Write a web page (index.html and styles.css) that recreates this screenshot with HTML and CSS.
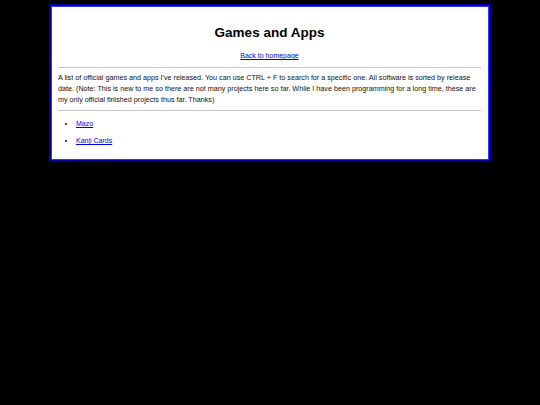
FILE: index.html
```html
<!DOCTYPE html>
<html lang="en">
<head>
<meta charset="utf-8">
<title>Games and Apps</title>
<link rel="stylesheet" href="styles.css">
</head>
<body>
<main class="box">
  <h1 class="title">Games and Apps</h1>
  <p class="back"><a href="#">Back to homepage</a></p>
  <hr class="rule rule-top">
  <p class="intro">A list of official games and apps I've released. You can use CTRL + F to search for a specific one. All software is sorted by release date. (Note: This is new to me so there are not many projects here so far. While I have been programming for a long time, these are my only official finished projects thus far. Thanks)</p>
  <hr class="rule rule-mid">
  <ul class="list">
    <li><a href="#">Mazo</a></li>
    <li><a href="#">Kanji Cards</a></li>
  </ul>
</main>
</body>
</html>
```

FILE: styles.css
```css
html, body {
  margin: 0;
  padding: 0;
  background: #000;
}
body {
  font-family: "Liberation Sans", Arial, sans-serif;
  color: #111;
}
.box {
  box-sizing: border-box;
  width: 442px;
  margin: 4px auto 0;
  background: #fff;
  border: 2px solid #00009a;
  box-shadow: inset 0 0 0 1px #3535ff;
  padding: 1px 8px 13px 7px;
}
.title {
  margin: 16px 0 0;
  font-size: 13.5px;
  line-height: 20px;
  font-weight: bold;
  text-align: center;
  color: #000;
}
.back {
  margin: 8px 0 0;
  font-size: 7px;
  line-height: 10px;
  text-align: center;
}
a {
  color: #0000ee;
  text-decoration: underline;
}
.rule {
  border: 0;
  border-top: 1px solid #c8c8c8;
  height: 0;
  margin: 0;
}
.rule-top { margin-top: 6px; }
.rule-mid { margin-top: 5px; }
.intro {
  margin: 4px 0 0;
  font-size: 7.2px;
  line-height: 11px;
}
.list {
  margin: 7px 0 0;
  padding-left: 18px;
  display: flex;
  flex-direction: column;
  gap: 5px;
  font-size: 7px;
  line-height: 12px;
}
.list li {
  display: list-item;
}
```
